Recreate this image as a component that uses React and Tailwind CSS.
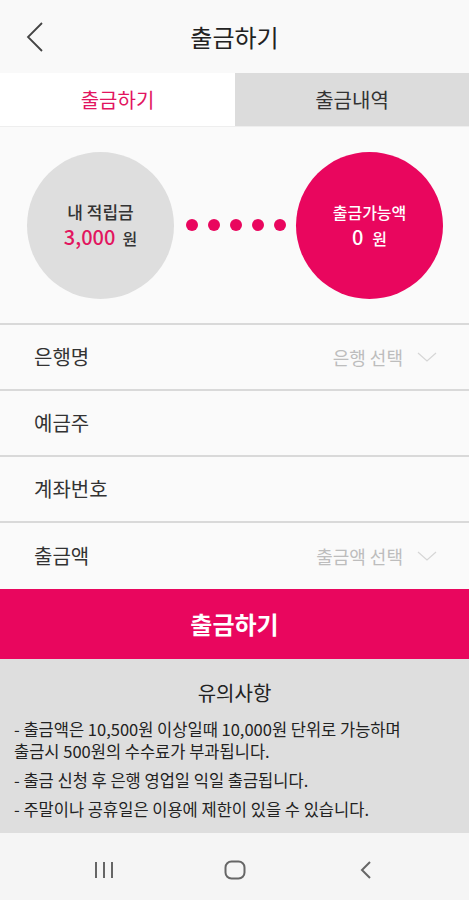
import React from "react";

const F = { fontFamily: '"Noto Sans CJK KR", "Noto Sans", sans-serif' };

function Chevron() {
  return (
    <svg width="20" height="10" viewBox="0 0 20 10" fill="none">
      <path d="M1 1 L10 9 L19 1" stroke="#d6d6d6" strokeWidth="1.2" />
    </svg>
  );
}

function Row({ label, right, last }) {
  return (
    <div
      className={
        last
          ? "h-[66px] flex items-center justify-between pl-[34px] pr-[32px]"
          : "h-[66px] flex items-center justify-between pl-[34px] pr-[32px] border-b-2 border-[#d9d9d9]"
      }
    >
      <span className="text-[20px] text-[#333]">{label}</span>
      {right && (
        <div className="flex items-center gap-[14px]">
          <span className="text-[18px] text-[#bdbdbd]">{right}</span>
          <Chevron />
        </div>
      )}
    </div>
  );
}

export default function App() {
  return (
    <div className="w-[469px] h-[900px] bg-[#fafafa] flex flex-col overflow-hidden" style={F}>
      <div className="h-[73px] shrink-0 bg-[#f9f9f9] relative flex items-center justify-center">
        <svg className="absolute left-[24px] top-[21px]" width="22" height="32" viewBox="0 0 22 32" fill="none">
          <path d="M18 2 L4 16 L18 30" stroke="#444" strokeWidth="1.8" />
        </svg>
        <span className="text-[24px] text-[#222]">출금하기</span>
      </div>
      <div className="h-[54px] shrink-0 flex border-b border-[#eeeeee]">
        <div className="w-[235px] bg-white flex items-center justify-center text-[20px] text-[#e2155f]">출금하기</div>
        <div className="flex-1 bg-[#dcdcdc] flex items-center justify-center text-[20px] text-[#333]">출금내역</div>
      </div>
      <div className="h-[198px] shrink-0 flex items-center pl-[27px] border-b-2 border-[#d9d9d9]">
        <div className="w-[147px] h-[147px] rounded-full bg-[#dedede] flex flex-col items-center justify-center">
          <span className="text-[17px] font-medium text-[#333] leading-[24px]">내 적립금</span>
          <span className="leading-[26px] font-medium">
            <span className="text-[20px] text-[#e2155f]">3,000</span>
            <span className="text-[16px] text-[#333] ml-[7px]">원</span>
          </span>
        </div>
        <div className="flex gap-[10px] ml-[12px] mr-[10px]">
          <div className="w-[12px] h-[12px] rounded-full bg-[#e9065e]" />
          <div className="w-[12px] h-[12px] rounded-full bg-[#e9065e]" />
          <div className="w-[12px] h-[12px] rounded-full bg-[#e9065e]" />
          <div className="w-[12px] h-[12px] rounded-full bg-[#e9065e]" />
          <div className="w-[12px] h-[12px] rounded-full bg-[#e9065e]" />
        </div>
        <div className="w-[147px] h-[147px] rounded-full bg-[#e9065e] flex flex-col items-center justify-center">
          <span className="text-[16px] font-medium text-white leading-[24px]">출금가능액</span>
          <span className="leading-[26px] text-white font-medium">
            <span className="text-[20px]">0</span>
            <span className="text-[16px] ml-[9px]">원</span>
          </span>
        </div>
      </div>
      <Row label="은행명" right="은행 선택" />
      <Row label="예금주" />
      <Row label="계좌번호" />
      <Row label="출금액" right="출금액 선택" last />
      <div className="h-[70px] shrink-0 bg-[#e9065e] flex items-center justify-center text-white text-[24px] font-bold">
        출금하기
      </div>
      <div className="h-[174px] shrink-0 bg-[#dedede] px-[14px] pt-[21px]">
        <div className="text-center text-[20px] text-[#222] leading-[26px] mb-[12px]">유의사항</div>
        <div className="text-[16.5px] text-[#222] leading-[22px]">
          <p>- 출금액은 10,500원 이상일때 10,000원 단위로 가능하며</p>
          <p>출금시 500원의 수수료가 부과됩니다.</p>
          <p className="mt-[7px]">- 출금 신청 후 은행 영업일 익일 출금됩니다.</p>
          <p className="mt-[7px]">- 주말이나 공휴일은 이용에 제한이 있을 수 있습니다.</p>
        </div>
      </div>
      <div className="flex-1 bg-[#f5f5f5] flex items-center justify-center pt-[6px]">
        <div className="w-[131px] flex justify-center">
          <svg width="20" height="18" viewBox="0 0 20 18" fill="none">
            <path d="M2 1 V17 M10 1 V17 M18 1 V17" stroke="#666" strokeWidth="2" />
          </svg>
        </div>
        <div className="w-[131px] flex justify-center">
          <svg width="22" height="20" viewBox="0 0 22 20" fill="none">
            <rect x="1.5" y="1.5" width="19" height="17" rx="6" stroke="#666" strokeWidth="2" />
          </svg>
        </div>
        <div className="w-[131px] flex justify-center">
          <svg width="12" height="20" viewBox="0 0 12 20" fill="none">
            <path d="M10 2 L2 10 L10 18" stroke="#666" strokeWidth="2" />
          </svg>
        </div>
      </div>
    </div>
  );
}
